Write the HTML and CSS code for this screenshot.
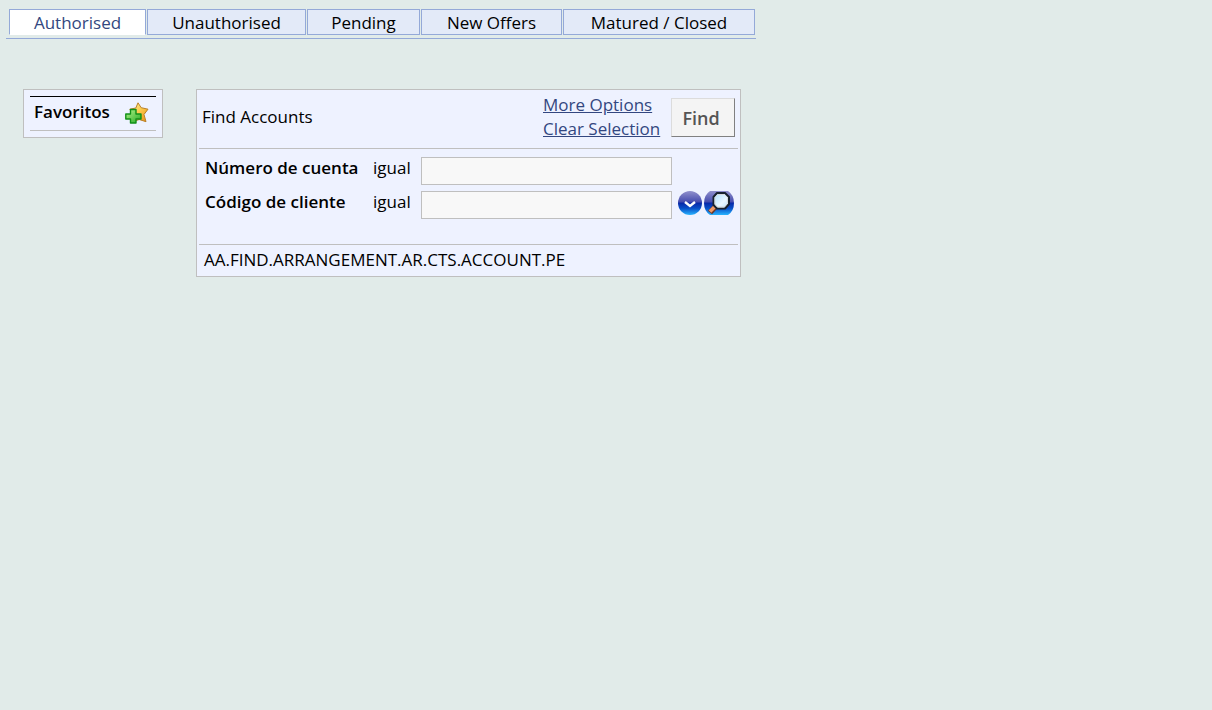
FILE: index.html
```html
<!DOCTYPE html>
<html lang="es">
<head>
<meta charset="utf-8">
<title>Find Accounts</title>
<link rel="stylesheet" href="styles.css">
</head>
<body>
<nav class="tabs">
  <a class="tab tab-active" href="#authorised">Authorised</a>
  <a class="tab" href="#unauthorised">Unauthorised</a>
  <a class="tab" href="#pending">Pending</a>
  <a class="tab" href="#offers">New Offers</a>
  <a class="tab" href="#closed">Matured / Closed</a>
</nav>
<main class="content">
  <aside class="favourites">
    <div class="favourites-row">
      <span class="favourites-title">Favoritos</span>
      <button class="icon-button" type="button" aria-label="Favoritos">
        <svg width="24" height="22" viewBox="0 0 24 22">
          <defs>
            <linearGradient id="gold" x1="0" y1="0" x2="1" y2="1"><stop offset="0" stop-color="#fff3a0"/><stop offset=".5" stop-color="#fbc84a"/><stop offset="1" stop-color="#e98a10"/></linearGradient>
            <linearGradient id="green" x1="0" y1="0" x2="1" y2="1"><stop offset="0" stop-color="#b5f58a"/><stop offset="1" stop-color="#22a822"/></linearGradient>
          </defs>
          <path d="M13 .8l3.200 4.900 6.800 1.500-4 5.300 2 7.200-6.800-2.200-6.200 2.200.5-7.200L4.800 7.200l6-1.200z" fill="url(#gold)" stroke="#b98028" stroke-linejoin="round"/>
          <path d="M5.500 7.500h5.500V12h5v5h-5v4H5.500v-4H.8v-5h4.700z" fill="url(#green)" stroke="#129018" stroke-width="1.400" stroke-linejoin="round"/>
        </svg>
      </button>
    </div>
  </aside>
  <form class="panel">
    <header class="panel-head">
      <span class="panel-title">Find Accounts</span>
      <div class="panel-links">
        <a href="#more">More Options</a>
        <a href="#clear">Clear Selection</a>
      </div>
      <button class="find" type="button">Find</button>
    </header>
    <div class="fields">
      <label class="field-label" for="account">Número de cuenta</label>
      <span class="field-operator">igual</span>
      <input class="field-input" id="account" type="text">
      <div class="field-tools"></div>
      <label class="field-label" for="customer">Código de cliente</label>
      <span class="field-operator">igual</span>
      <input class="field-input" id="customer" type="text">
      <div class="field-tools">
        <button class="icon-button" type="button" aria-label="Lista">
          <svg width="24" height="24" viewBox="0 0 24 24">
            <defs><linearGradient id="blue" x1="0" y1="0" x2="0" y2="1"><stop offset="0" stop-color="#9090cc"/><stop offset=".46" stop-color="#454cae"/><stop offset=".5" stop-color="#0828a8"/><stop offset=".72" stop-color="#0750c8"/><stop offset="1" stop-color="#28b4ff"/></linearGradient></defs>
            <circle cx="12" cy="12" r="12" fill="url(#blue)"/>
            <path d="M7 11l5 4 5-4" fill="none" stroke="#fff" stroke-width="2.400"/>
          </svg>
        </button>
        <button class="icon-button" type="button" aria-label="Buscar">
          <svg width="30" height="24" viewBox="0 0 30 24">
            <defs>
              <linearGradient id="lens" x1="0" y1="0" x2="1" y2="1"><stop offset="0" stop-color="#a8dcff"/><stop offset=".6" stop-color="#eaf8ff"/><stop offset="1" stop-color="#b8e4ff"/></linearGradient>
            </defs>
            <path d="M6 0h18q6 4 6 12t-6 12H6Q0 20 0 12T6 0z" fill="url(#blue)"/>
            <path d="M12 15l-6 6.500" stroke="#6b3626" stroke-width="5.500"/>
            <path d="M11.500 15l-5.500 5.500" stroke="#ee9a68" stroke-width="3.500"/>
            <path d="M13 2h8l4 4v7l-4 4.500h-8L9.500 14V6z" fill="url(#lens)" stroke="#18222e" stroke-width="2" stroke-linejoin="round"/>
            <path d="M13.600 3.500h6.800l3 3v6l-3 3.500h-6.800L11 13V6.500z" fill="none" stroke="#d5d9d8" stroke-width="1"/>
          </svg>
        </button>
      </div>
    </div>
    <footer class="panel-foot">AA.FIND.ARRANGEMENT.AR.CTS.ACCOUNT.PE</footer>
  </form>
</main>
</body>
</html>
```
FILE: styles.css
```css
* {
  box-sizing: border-box;
}

body {
  margin: 0;
  padding: 9px 6px;
  background: #e1ebe9;
  color: #000;
  font: 17px/24px "Trebuchet MS", "Open Sans", sans-serif;
}

.tabs {
  display: grid;
  grid-template-columns: 137px 159px 113px 141px 192px;
  gap: 1px;
  width: fit-content;
  padding: 0 1px 3px 3px;
  border-bottom: 1px solid #94a9d8;
}

.tab {
  height: 26px;
  border: 1px solid #94a9d8;
  background: #e3eaf8;
  color: #000;
  line-height: 26px;
  text-align: center;
  text-decoration: none;
}

.tab-active {
  border-bottom-color: #fff;
  background: #fff;
  color: #334780;
}

.content {
  display: flex;
  align-items: flex-start;
  gap: 33px;
  padding: 50px 17px 0;
}

.favourites {
  width: 140px;
  padding: 6px;
  border: 1px solid #bfbfbf;
  background: #eef2ff;
}

.favourites-row {
  display: flex;
  align-items: center;
  justify-content: space-between;
  height: 35px;
  padding: 0 7px 2px 4px;
  border-top: 1px solid #000;
  border-bottom: 1px solid #bfbfbf;
}

.favourites-title,
.field-label {
  font-weight: 600;
}

.favourites-title {
  padding-bottom: 2px;
}

.icon-button {
  display: block;
  padding: 0;
  border: 0;
  background: none;
}

.icon-button svg {
  display: block;
}

.panel {
  width: 545px;
  padding: 2px;
  border: 1px solid #bfbfbf;
  background: #eef2ff;
}

.panel-head {
  display: flex;
  align-items: center;
  height: 57px;
  padding: 0 3px 5px;
  border-bottom: 1px solid #bfbfbf;
}

.panel-title {
  flex: 1;
  padding-bottom: 2px;
}

.panel-links {
  display: flex;
  flex-direction: column;
  width: 128px;
  padding-bottom: 2px;
}

.panel-links a {
  color: #334780;
}

.find {
  width: 64px;
  height: 39px;
  padding: 0 4px 0 0;
  border: 1px solid;
  border-color: #dcdcdc #808080 #808080 #dcdcdc;
  background: #f4f4f4;
  color: #555;
  font: inherit;
  font-size: 18px;
  font-weight: 600;
}

.fields {
  display: grid;
  grid-template-columns: 168px 48px 251px 56px;
  row-gap: 6px;
  height: 95px;
  padding: 8px 6px 0;
  align-content: start;
}

.field-label,
.field-operator {
  line-height: 22px;
}

.field-input {
  width: 100%;
  height: 28px;
  padding: 2px 4px;
  border: 1px solid #bfbfbf;
  background: #f8f8f8;
  font: inherit;
}

.field-tools {
  display: flex;
  align-items: flex-start;
  gap: 2px;
  padding-left: 6px;
}

.panel-foot {
  height: 30px;
  padding: 3px 5px;
  border-top: 1px solid #bfbfbf;
}
```
